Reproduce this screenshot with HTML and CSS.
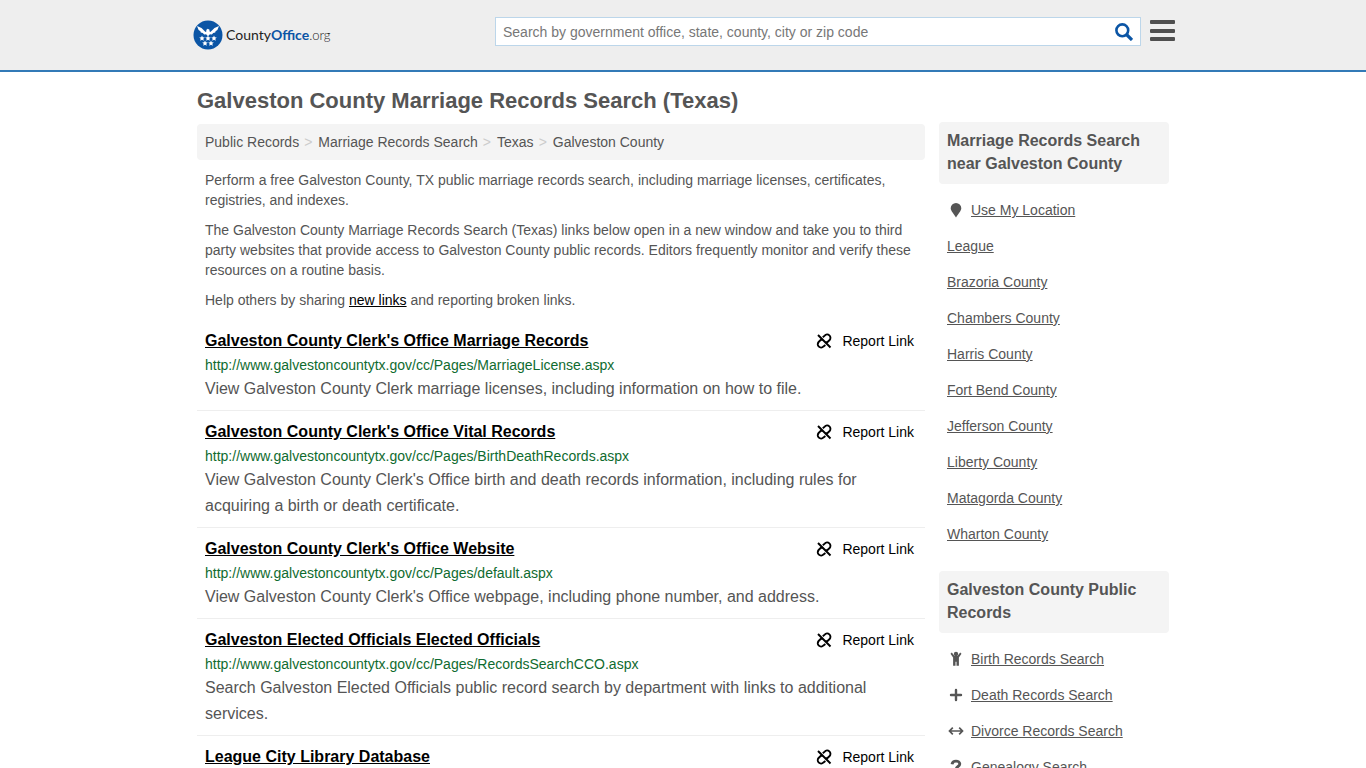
FILE: index.html
```html
<!DOCTYPE html>
<html lang="en">
<head>
<meta charset="utf-8">
<meta name="viewport" content="width=device-width, initial-scale=1">
<title>Galveston County Marriage Records Search (Texas)</title>
<link rel="stylesheet" href="styles.css">
</head>
<body>
<svg class="sprite" aria-hidden="true">
  <symbol id="unlink" viewBox="0 0 16 16">
    <g fill="none" stroke="currentColor" stroke-width="1.900">
      <path d="M2 2 14.500 14.500"/>
      <path d="M6.800 4.300 8.700 2.600A3.200 3.200 0 0 1 13.600 7L11.300 9.200H9.500"/>
      <path d="M9.400 12 7.500 13.400A3.200 3.200 0 0 1 2.600 9L4.900 6.800H6.700"/>
    </g>
  </symbol>
</svg>
<header class="site-header">
  <div class="header-inner">
    <a class="logo" href="#" aria-label="CountyOffice.org">
      <svg class="logo-mark" viewBox="0 0 30 30" aria-hidden="true">
        <circle cx="15" cy="15" r="14.500" fill="#0b55a5"/>
        <g fill="#fff">
          <path d="M4 6 8.500 8 12.500 12l1-.8L13.200 10l1.600-1.200 2 1.200-.6 1 1.200 1L21.500 8 26 6l-1.600 4-1.800 1.300-.4 1.200-2 .5-1.300 1.400-2-.2-1.900 2-1.900-2-2 .2L9.800 13l-2-.5-.4-1.200L5.600 10z"/>
          <path id="star" d="M9 15.500l.8 1.800 2 .2-1.500 1.300.5 1.900L9 19.700l-1.800 1 .5-1.900-1.500-1.300 2-.2z"/>
          <use href="#star" x="6"/>
          <use href="#star" x="12"/>
          <use href="#star" x="3" y="5"/>
          <use href="#star" x="9" y="5"/>
        </g>
      </svg>
      <span class="logo-text">County<b>Office</b><span class="logo-tld">.org</span></span>
    </a>
    <form class="search" role="search">
      <input class="search-input" type="text" aria-label="Search" placeholder="Search by government office, state, county, city or zip code">
      <button class="search-button" type="button" aria-label="Search">
        <svg viewBox="0 0 18 18" aria-hidden="true"><g fill="none" stroke="#0b55a5"><circle cx="7.300" cy="7.300" r="5.900" stroke-width="2.600"/><path d="M11.500 11.500 17 17" stroke-width="3.200"/></g></svg>
      </button>
    </form>
    <button class="menu-button" type="button" aria-label="Menu">
      <svg viewBox="0 0 25 22" aria-hidden="true"><g fill="#4f4f4f"><rect y="0" width="25" height="4" rx="1"/><rect y="9" width="25" height="4" rx="1"/><rect y="17" width="25" height="4" rx="1"/></g></svg>
    </button>
  </div>
</header>
<div class="page">
  <main class="content">
    <h1 class="page-title">Galveston County Marriage Records Search (Texas)</h1>
    <nav class="breadcrumb" aria-label="Breadcrumb">
      <a href="#">Public Records</a><span class="sep">&gt;</span><a href="#">Marriage Records Search</a><span class="sep">&gt;</span><a href="#">Texas</a><span class="sep">&gt;</span><a href="#">Galveston County</a>
    </nav>
    <div class="intro">
      <p>Perform a free Galveston County, TX public marriage records search, including marriage licenses, certificates, registries, and indexes.</p>
      <p>The Galveston County Marriage Records Search (Texas) links below open in a new window and take you to third party websites that provide access to Galveston County public records. Editors frequently monitor and verify these resources on a routine basis.</p>
      <p>Help others by sharing <a href="#">new links</a> and reporting broken links.</p>
    </div>
    <article class="result">
      <div class="result-head">
        <h2 class="result-title"><a href="#">Galveston County Clerk's Office Marriage Records</a></h2>
        <a class="report" href="#"><svg aria-hidden="true"><use href="#unlink"/></svg>Report Link</a>
      </div>
      <div class="result-url">http://www.galvestoncountytx.gov/cc/Pages/MarriageLicense.aspx</div>
      <p class="result-text">View Galveston County Clerk marriage licenses, including information on how to file.</p>
    </article>
    <article class="result">
      <div class="result-head">
        <h2 class="result-title"><a href="#">Galveston County Clerk's Office Vital Records</a></h2>
        <a class="report" href="#"><svg aria-hidden="true"><use href="#unlink"/></svg>Report Link</a>
      </div>
      <div class="result-url">http://www.galvestoncountytx.gov/cc/Pages/BirthDeathRecords.aspx</div>
      <p class="result-text">View Galveston County Clerk's Office birth and death records information, including rules for acquiring a birth or death certificate.</p>
    </article>
    <article class="result">
      <div class="result-head">
        <h2 class="result-title"><a href="#">Galveston County Clerk's Office Website</a></h2>
        <a class="report" href="#"><svg aria-hidden="true"><use href="#unlink"/></svg>Report Link</a>
      </div>
      <div class="result-url">http://www.galvestoncountytx.gov/cc/Pages/default.aspx</div>
      <p class="result-text">View Galveston County Clerk's Office webpage, including phone number, and address.</p>
    </article>
    <article class="result">
      <div class="result-head">
        <h2 class="result-title"><a href="#">Galveston Elected Officials Elected Officials</a></h2>
        <a class="report" href="#"><svg aria-hidden="true"><use href="#unlink"/></svg>Report Link</a>
      </div>
      <div class="result-url">http://www.galvestoncountytx.gov/cc/Pages/RecordsSearchCCO.aspx</div>
      <p class="result-text">Search Galveston Elected Officials public record search by department with links to additional services.</p>
    </article>
    <article class="result">
      <div class="result-head">
        <h2 class="result-title"><a href="#">League City Library Database</a></h2>
        <a class="report" href="#"><svg aria-hidden="true"><use href="#unlink"/></svg>Report Link</a>
      </div>
    </article>
  </main>
  <aside class="sidebar">
    <section class="side-block">
      <h2 class="side-title">Marriage Records Search near Galveston County</h2>
      <ul class="side-list">
        <li><svg class="side-icon" viewBox="0 0 18 18" aria-hidden="true"><path fill="currentColor" d="M9 2a5.300 5.300 0 0 1 5.300 5.300C14.300 10 11 13 9 16.500 7 13 3.700 10 3.700 7.300A5.300 5.300 0 0 1 9 2z"/></svg><a href="#">Use My Location</a></li>
        <li><a href="#">League</a></li>
        <li><a href="#">Brazoria County</a></li>
        <li><a href="#">Chambers County</a></li>
        <li><a href="#">Harris County</a></li>
        <li><a href="#">Fort Bend County</a></li>
        <li><a href="#">Jefferson County</a></li>
        <li><a href="#">Liberty County</a></li>
        <li><a href="#">Matagorda County</a></li>
        <li><a href="#">Wharton County</a></li>
      </ul>
    </section>
    <section class="side-block">
      <h2 class="side-title">Galveston County Public Records</h2>
      <ul class="side-list">
        <li><svg class="side-icon" viewBox="0 0 18 18" aria-hidden="true"><g fill="currentColor"><circle cx="9" cy="4" r="2.200"/><path d="M4.800 2.600 7.600 6h2.800L13.200 2.600l1.300 1.100L11.900 7.500V15.800H9.500v-4h-1v4H6.100V7.500L3.500 3.700z"/></g></svg><a href="#">Birth Records Search</a></li>
        <li><svg class="side-icon" viewBox="0 0 18 18" aria-hidden="true"><path fill="none" stroke="currentColor" stroke-width="2.400" stroke-linecap="round" d="M9 4v10M4 9h10"/></svg><a href="#">Death Records Search</a></li>
        <li><svg class="side-icon" viewBox="0 0 18 18" aria-hidden="true"><path fill="none" stroke="currentColor" stroke-width="1.700" d="M3 9h12M5.800 5.700 2.500 9l3.300 3.300M12.200 5.700 15.500 9l-3.300 3.300"/></svg><a href="#">Divorce Records Search</a></li>
        <li><svg class="side-icon" viewBox="0 0 18 18" aria-hidden="true"><path fill="none" stroke="currentColor" stroke-width="2.800" d="M5 6.200C5.500 3.800 7.200 3.200 9 3.200c2.200 0 3.800 1 3.800 2.800 0 2.500-3.600 2.500-3.600 5M9.200 13v2.600"/></svg><a href="#">Genealogy Search</a></li>
      </ul>
    </section>
  </aside>
</div>
</body>
</html>
```
FILE: styles.css
```css
* { box-sizing: border-box; }

body {
  margin: 0;
  background: #fff;
  color: #555;
  font-family: "Liberation Sans", Arial, sans-serif;
  font-size: 14px;
  line-height: 20px;
}

h1, h2, p, ul { margin: 0; padding: 0; }
ul { list-style: none; }
a { color: inherit; }
button { border: 0; padding: 0; background: none; cursor: pointer; }
svg { display: block; }
.sprite { display: none; }

.site-header {
  background: #eee;
  border-bottom: 2px solid #337ab7;
}

.header-inner {
  display: flex;
  align-items: flex-start;
  max-width: 984px;
  height: 70px;
  margin: 0 auto;
  padding: 17px 0 0 2px;
}

.logo {
  display: flex;
  align-items: center;
  gap: 3px;
  margin-top: 3px;
  text-decoration: none;
}

.logo-mark { width: 30px; height: 30px; }

.logo-text {
  color: #222;
  font-family: Lato, sans-serif;
  font-size: 14px;
}

.logo-text b { color: #0b55a5; }
.logo-tld { font-size: 13px; font-weight: 300; }

.search {
  display: flex;
  flex: 0 1 646px;
  height: 29px;
  margin-left: auto;
  background: #fff;
  border: 1px solid #bcd6ea;
}

.search-input {
  flex: 1;
  min-width: 0;
  padding: 0 7px;
  border: 0;
  background: none;
  color: #555;
  font: inherit;
}

.search-input::placeholder { color: #777; }
.search-button { width: 32px; padding-left: 7px; }
.search-button svg { width: 18px; height: 18px; }

.menu-button { margin: 3px 0 0 9px; }
.menu-button svg { width: 25px; height: 22px; }

.page {
  display: grid;
  grid-template-columns: minmax(0, 1fr) 230px;
  gap: 14px;
  max-width: 972px;
  margin: 0 auto;
}

.page-title {
  padding: 15px 0 9px;
  font-size: 22px;
  line-height: 28px;
}

.breadcrumb {
  padding: 8px;
  background: #f4f4f4;
  border-radius: 4px;
}

.breadcrumb a { text-decoration: none; }
.sep { padding: 0 6px 0 5px; color: #ccc; }

.intro { padding: 10px 8px; }
.intro p + p { margin-top: 10px; }
.intro a { color: #000; }

.result {
  padding: 9px 8px 8px;
  border-bottom: 1px solid #eee;
}

.result-head {
  display: flex;
  justify-content: space-between;
  margin-bottom: 2px;
  line-height: 24px;
}

.result-title { font-size: 16px; }
.result-title a { color: #000; }

.report {
  display: flex;
  align-items: center;
  gap: 10px;
  padding-right: 3px;
  color: #000;
  text-decoration: none;
}

.report svg { width: 16px; height: 16px; }
.result-url {
  margin-bottom: 1px;
  color: #0f6b2f;
}

.result-text {
  font-size: 16px;
  line-height: 26px;
}

.sidebar { padding-top: 50px; }
.side-block { margin-bottom: 19px; }

.side-title {
  margin-bottom: 8px;
  padding: 7px 8px 9px;
  background: #f4f4f4;
  border-radius: 4px;
  font-size: 16px;
  line-height: 23px;
}

.side-list li {
  display: flex;
  align-items: center;
  gap: 6px;
  padding: 8px;
}

.side-icon { width: 18px; height: 18px; }
```
